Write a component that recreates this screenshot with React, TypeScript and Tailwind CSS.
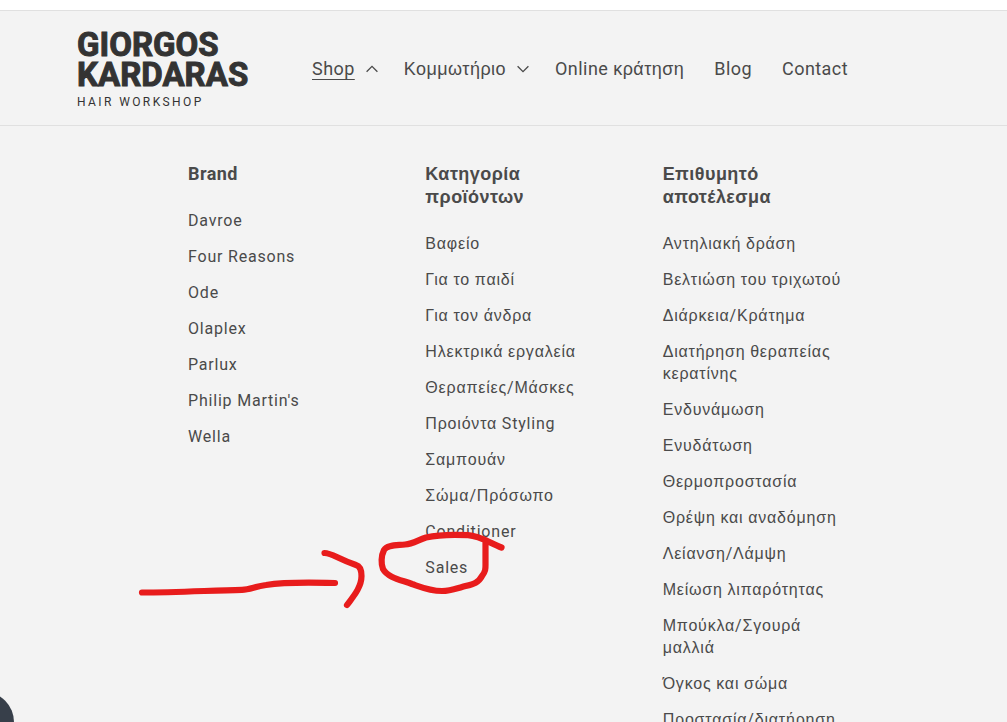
import React from "react";

type Column = { title: string; items: string[] };

const columns: Column[] = [
  {
    title: "Brand",
    items: ["Davroe", "Four Reasons", "Ode", "Olaplex", "Parlux", "Philip Martin's", "Wella"],
  },
  {
    title: "Κατηγορία προϊόντων",
    items: [
      "Βαφείο",
      "Για το παιδί",
      "Για τον άνδρα",
      "Ηλεκτρικά εργαλεία",
      "Θεραπείες/Μάσκες",
      "Προιόντα Styling",
      "Σαμπουάν",
      "Σώμα/Πρόσωπο",
      "Conditioner",
      "Sales",
    ],
  },
  {
    title: "Επιθυμητό αποτέλεσμα",
    items: [
      "Αντηλιακή δράση",
      "Βελτιώση του τριχωτού",
      "Διάρκεια/Κράτημα",
      "Διατήρηση θεραπείας κερατίνης",
      "Ενδυνάμωση",
      "Ενυδάτωση",
      "Θερμοπροστασία",
      "Θρέψη και αναδόμηση",
      "Λείανση/Λάμψη",
      "Μείωση λιπαρότητας",
      "Μπούκλα/Σγουρά μαλλιά",
      "Όγκος και σώμα",
      "Προστασία/διατήρηση",
    ],
  },
];

// Greek words are set in Liberation Sans, Latin ones in Roboto.
function Label({ text }: { text: string }) {
  return (
    <>
      {text.split(/([\u0370-\u03ff]+)/).map((part, i) =>
        i % 2 === 1 ? (
          <span key={i} className="font-['Liberation_Sans',sans-serif] leading-none">{part}</span>
        ) : (
          part
        ),
      )}
    </>
  );
}

function Caret({ open = false }: { open?: boolean }) {
  return (
    <svg
      viewBox="0 0 12 8"
      className={open ? "h-2 w-3 rotate-180" : "h-2 w-3"}
      fill="none"
      stroke="currentColor"
      strokeWidth="1.3"
      aria-hidden="true"
    >
      <path d="M0.6 1.2 L6 6.6 L11.4 1.2" />
    </svg>
  );
}

function Logo() {
  return (
    <a href="#home" className="flex w-[204px] shrink-0 flex-col pt-1 text-[#333333]">
      <span className="text-[33px] leading-[30px] font-bold [-webkit-text-stroke:1px_#333333]">GIORGOS</span>
      <span className="text-[33px] leading-[30px] font-bold [-webkit-text-stroke:1px_#333333]">KARDARAS</span>
      <span className="mt-1 text-xs leading-4 tracking-[0.2em]">HAIR WORKSHOP</span>
    </a>
  );
}

function Annotation() {
  return (
    <svg
      className="pointer-events-none absolute top-[520px] left-[130px] h-[100px] w-[400px]"
      viewBox="0 0 400 100"
      fill="none"
      stroke="#e81c1c"
      strokeWidth="6.2"
      strokeLinecap="round"
      strokeLinejoin="round"
      aria-hidden="true"
    >
      <path d="M12 72.500 C45 72.500 80 70.500 112 69.800 C120 69.500 125 66.500 136 65 C158 61.500 180 62.500 205 63" />
      <path d="M194.500 33 C202 33 208 39 226 45 C231 46.500 231.500 52 231.500 56 C231.500 68 222 78 217 85" />
      <path d="M371.500 27.500 C360 23 350 16 338 15.200 C325 14.500 308 14.800 296 17.500 C288 20 283 24 275 24.500 C265 25.500 257 25 254 30 C251 36 251 44 253 49 C258 58 272 60 282 64 C292 67.500 300 71 312 71 C320 71 325 69 332 67 C343 64 348 63.500 352 56 C356 51 355.500 48 355.500 43 L355.500 20" />
    </svg>
  );
}

export default function App() {
  return (
    <div className="relative h-screen overflow-hidden bg-[#f3f3f3] font-[Roboto,'Liberation_Sans',sans-serif] text-[#4a4a4a]">
      <div className="h-[10px] bg-white" />
      <header className="flex h-[116px] items-center border-y border-[#e0e0e0] pl-[77px]">
        <Logo />
        <nav className="ml-[31px] pt-0.5 text-lg leading-6 tracking-wide">
          <ul className="flex items-center gap-[30px] whitespace-nowrap">
            <li>
              <button type="button" aria-expanded="true" className="-mr-1 flex items-center gap-[11px] tracking-wide">
                <span className="underline underline-offset-4">Shop</span>
                <Caret open />
              </button>
            </li>
            <li>
              <button type="button" aria-expanded="false" className="-mr-1 flex items-center gap-[11px] tracking-wide">
                <span><Label text="Κομμωτήριο" /></span>
                <Caret />
              </button>
            </li>
            <li><a href="#booking"><Label text="Online κράτηση" /></a></li>
            <li><a href="#blog">Blog</a></li>
            <li><a href="#contact">Contact</a></li>
          </ul>
        </nav>
      </header>
      <main className="grid grid-cols-3 gap-12 pt-9 pr-[155px] pl-[188px]">
        {columns.map((column) => (
          <section key={column.title}>
            <h2 className="mb-[18px] text-lg leading-[23px] font-bold tracking-wide">
              <Label text={column.title} />
            </h2>
            <ul className="text-base leading-[22px] tracking-wider">
              {column.items.map((item) => (
                <li key={item}>
                  <a href="#collection" className="block py-[7px]"><Label text={item} /></a>
                </li>
              ))}
            </ul>
          </section>
        ))}
      </main>
      <Annotation />
      <button
        type="button"
        aria-label="Chat"
        className="absolute -bottom-[30px] -left-[46px] size-[60px] rounded-full bg-[#373f4a]"
      />
    </div>
  );
}
